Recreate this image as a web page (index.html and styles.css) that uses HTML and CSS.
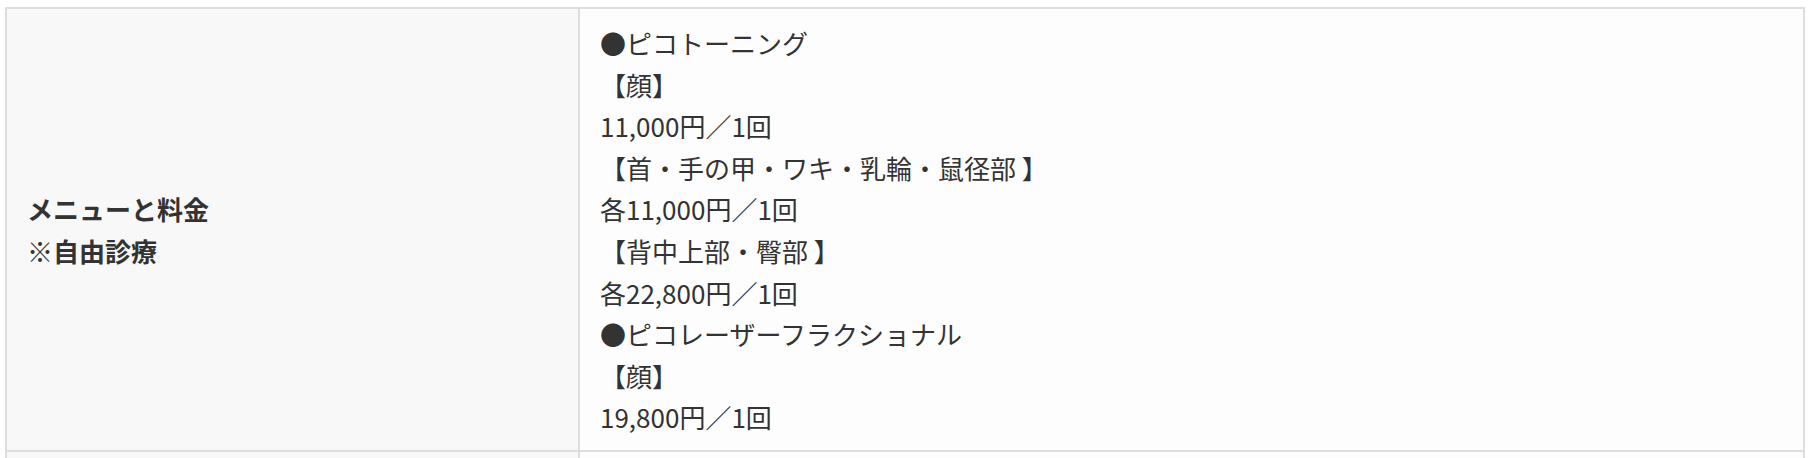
FILE: index.html
```html
<!DOCTYPE html>
<html lang="ja">
<head>
<meta charset="utf-8">
<title>メニューと料金</title>
<link rel="stylesheet" href="styles.css">
</head>
<body>
<div class="spec">
  <div class="row">
    <div class="head">メニューと料金<br>※自由診療</div>
    <div class="body">●ピコトーニング<br>【顔】<br>11,000円／1回<br>【首・手の甲・ワキ・乳輪・鼠径部 】<br>各11,000円／1回<br>【背中上部・臀部 】<br>各22,800円／1回<br>●ピコレーザーフラクショナル<br>【顔】<br>19,800円／1回</div>
  </div>
  <div class="row">
    <div class="head empty"></div>
    <div class="body empty"></div>
  </div>
</div>
</body>
</html>
```

FILE: styles.css
```css
html, body {
  margin: 0;
  padding: 0;
  background: #ffffff;
}
body {
  padding: 7px 0 0 5px;
  font-family: "Noto Sans CJK JP", "Noto Sans", sans-serif;
  color: #333333;
  font-size: 26px;
  line-height: 1.6;
}
.spec {
  width: 1800px;
  box-sizing: border-box;
  border-top: 2px solid #dddddd;
  border-left: 2px solid #dddddd;
}
.row {
  display: grid;
  grid-template-columns: 573px 1225px;
}
.head, .body {
  box-sizing: border-box;
  border-right: 2px solid #dddddd;
  border-bottom: 2px solid #dddddd;
  padding: 13px 20px 12px 20px;
}
.head {
  background: #f8f8f8;
  font-weight: bold;
  display: flex;
  flex-direction: column;
  justify-content: center;
}
.body {
  background: #fdfdfd;
}
.head.empty, .body.empty {
  height: 6px;
  padding: 0;
  border-bottom: none;
}
```
